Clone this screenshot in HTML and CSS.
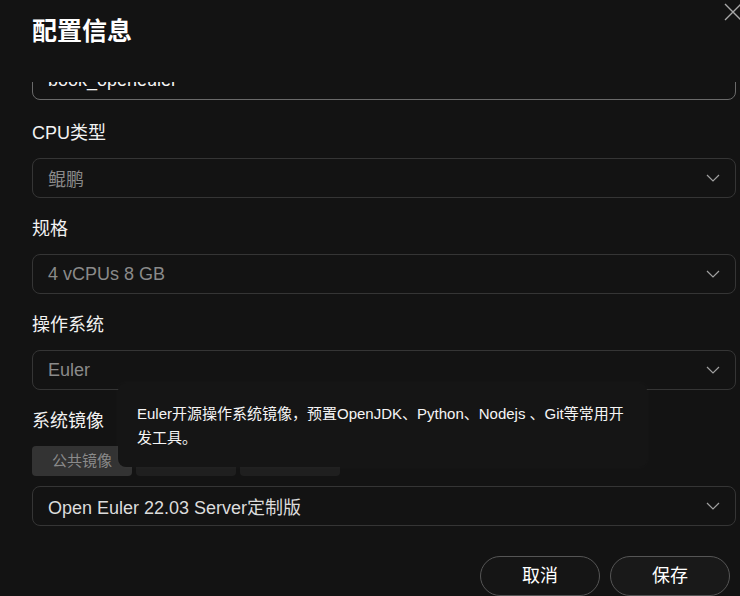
FILE: index.html
```html
<!DOCTYPE html>
<html lang="zh-CN">

<head>
    <meta charset="UTF-8">
    <title>配置信息</title>
    <link rel="stylesheet" href="styles.css">
</head>

<body>
    <div class="dialog">
        <a class="close" href="#">
            <svg width="18" height="18" viewBox="0 0 18 18">
                <path d="M1 1L17 17M17 1L1 17" stroke="#a8a8a8" stroke-width="1.4" fill="none"/>
            </svg>
        </a>
        <div class="header">
            <h2 class="title">配置信息</h2>
        </div>
        <div class="body" id="formBody">
            <div class="form">
                <div class="item item-name">
                    <div class="label label-empty"></div>
                    <div class="input input-active">book_openeuler</div>
                </div>
                <div class="item">
                    <div class="label">CPU类型</div>
                    <div class="input select">
                        <span class="value muted">鲲鹏</span>
                        <svg class="arrow" width="14" height="8" viewBox="0 0 14 8"><path d="M1 1L7 7L13 1" stroke="#a0a0a0" stroke-width="1.2" fill="none"/></svg>
                    </div>
                </div>
                <div class="item">
                    <div class="label">规格</div>
                    <div class="input select">
                        <span class="value muted">4 vCPUs 8 GB</span>
                        <svg class="arrow" width="14" height="8" viewBox="0 0 14 8"><path d="M1 1L7 7L13 1" stroke="#a0a0a0" stroke-width="1.2" fill="none"/></svg>
                    </div>
                </div>
                <div class="item">
                    <div class="label">操作系统</div>
                    <div class="input select">
                        <span class="value muted">Euler</span>
                        <svg class="arrow" width="14" height="8" viewBox="0 0 14 8"><path d="M1 1L7 7L13 1" stroke="#a0a0a0" stroke-width="1.2" fill="none"/></svg>
                    </div>
                </div>
                <div class="item item-last">
                    <div class="label">系统镜像</div>
                    <ul class="tabs">
                        <li class="active">公共镜像</li>
                        <li></li>
                        <li></li>
                    </ul>
                    <div class="input select">
                        <span class="value">Open Euler 22.03 Server定制版</span>
                        <svg class="arrow" width="14" height="8" viewBox="0 0 14 8"><path d="M1 1L7 7L13 1" stroke="#a0a0a0" stroke-width="1.2" fill="none"/></svg>
                    </div>
                </div>
            </div>
        </div>
        <div class="footer">
            <a class="btn" href="#">取消</a>
            <a class="btn btn-save" href="#">保存</a>
        </div>
        <div class="tooltip">Euler开源操作系统镜像，预置OpenJDK、Python、Nodejs 、Git等常用开发工具。</div>
    </div>
    <script>
    (function () {
        let body = document.getElementById('formBody');
        body.scrollTop = 58;
    })();
    </script>
</body>

</html>
```

FILE: styles.css
```css
html,
body {
    width: 100%;
    height: 100%;
    margin: 0;
    padding: 0;
    background: #131313;
    overflow: hidden;
}

ul {
    margin: 0;
    padding: 0;
    list-style: none;
}

.dialog {
    width: 740px;
    height: 596px;
    position: relative;
    overflow: hidden;
    background: #131313;
    color: #f2f2f2;
    font-family: "Liberation Sans", "Noto Sans CJK SC", sans-serif;
}

.dialog .close {
    position: absolute;
    top: 3px;
    left: 724px;
    display: block;
    width: 18px;
    height: 18px;
}

.dialog .close svg {
    display: block;
}

.header {
    height: 82px;
    box-sizing: border-box;
    padding: 15px 0 0 32px;
}

.header .title {
    margin: 0;
    font-size: 25px;
    line-height: 32px;
    font-weight: bold;
    color: #fff;
}

.body {
    height: 448px;
    box-sizing: border-box;
    padding: 0 4px 0 32px;
    overflow-y: auto;
}

.body::-webkit-scrollbar {
    width: 4px;
}

.body::-webkit-scrollbar-track {
    background: transparent;
}

.body::-webkit-scrollbar-thumb {
    background: #2e2e2e;
    border-radius: 3px;
}

.form {
    padding-bottom: 10px;
}

.item {
    margin-bottom: 20px;
}

.item-name {
    margin-bottom: 22px;
}

.item-last {
    margin-bottom: 0;
}

.item .label {
    font-size: 18px;
    line-height: 22px;
    margin-bottom: 14px;
    color: #f2f2f2;
}

.item .label-empty {
    height: 22px;
}

.input {
    height: 40px;
    box-sizing: border-box;
    border: 1px solid #353535;
    border-radius: 8px;
    padding: 0 15px;
    display: flex;
    align-items: center;
    font-size: 18px;
    color: #f5f5f5;
}

.input-active {
    border-color: #6a6a6a;
}

.select {
    justify-content: space-between;
}

.select .value {
    color: #dcdcdc;
}

.select .value.muted {
    color: #8a8a8a;
}

.select .arrow {
    display: block;
}

.tabs {
    display: flex;
    gap: 4px;
    margin-bottom: 10px;
}

.tabs li {
    width: 100px;
    height: 30px;
    line-height: 30px;
    text-align: center;
    font-size: 15px;
    color: #8a8a8a;
    background: #1f1f1f;
    border-radius: 4px;
}

.tabs li.active {
    background: #333;
}

.footer {
    height: 66px;
    box-sizing: border-box;
    padding: 26px 10px 0 0;
    display: flex;
    justify-content: flex-end;
    gap: 10px;
}

.footer .btn {
    display: block;
    width: 120px;
    height: 40px;
    box-sizing: border-box;
    border: 1px solid #555;
    border-radius: 20px;
    background: #151515;
    color: #fff;
    font-size: 18px;
    line-height: 38px;
    text-align: center;
    text-decoration: none;
}

.footer .btn-save {
    background: #191919;
}

.tooltip {
    position: absolute;
    left: 118px;
    top: 383px;
    width: 529px;
    height: 84px;
    box-sizing: border-box;
    padding: 19px 20px 0 19px;
    background: #151515;
    border-radius: 8px;
    box-shadow: 0 0 6px rgba(255, 255, 255, .03);
    font-size: 15px;
    line-height: 24px;
    color: #f5f5f5;
}
```
